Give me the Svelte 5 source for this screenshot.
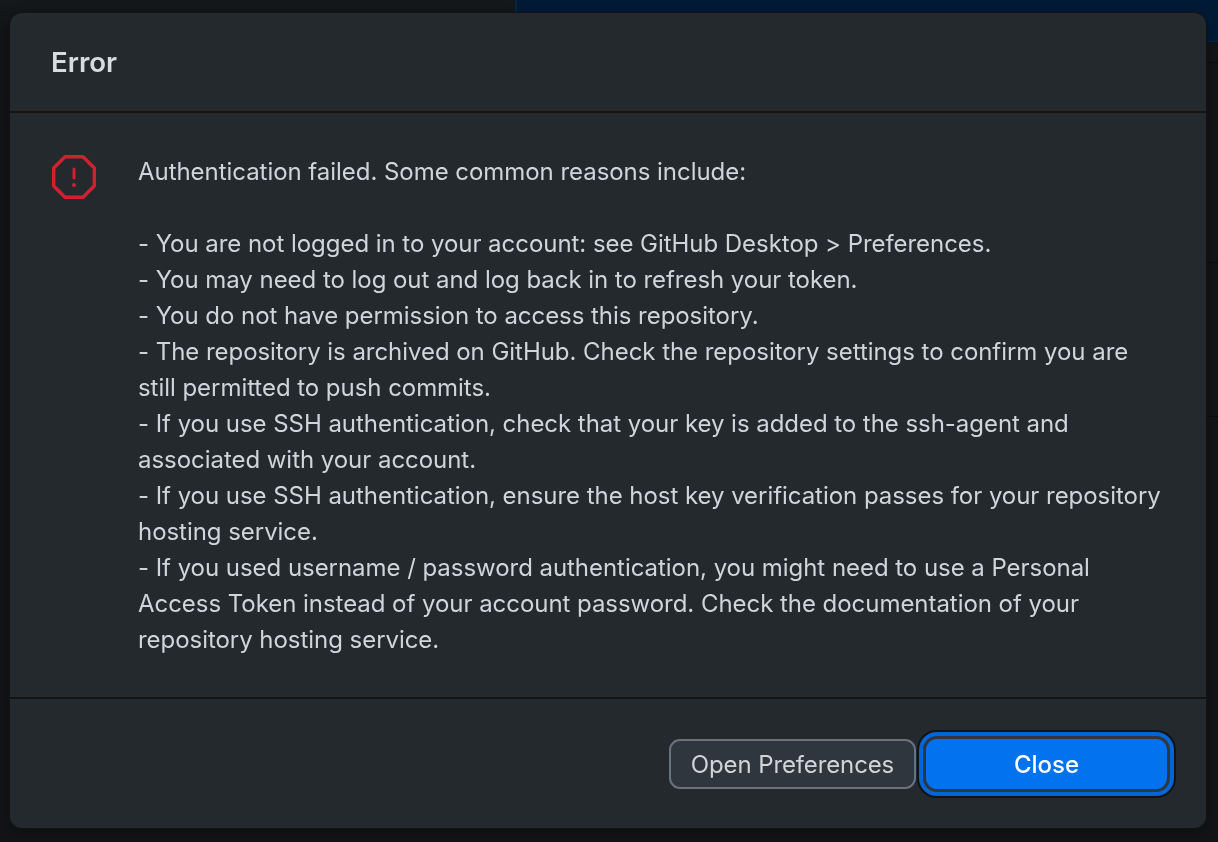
<script>
  const lines = [
    'Authentication failed. Some common reasons include:',
    '',
    '- You are not logged in to your account: see GitHub Desktop > Preferences.',
    '- You may need to log out and log back in to refresh your token.',
    '- You do not have permission to access this repository.',
    '- The repository is archived on GitHub. Check the repository settings to confirm you are still permitted to push commits.',
    '- If you use SSH authentication, check that your key is added to the ssh-agent and associated with your account.',
    '- If you use SSH authentication, ensure the host key verification passes for your repository hosting service.',
    '- If you used username / password authentication, you might need to use a Personal Access Token instead of your account password. Check the documentation of your repository hosting service.'
  ];
</script>

<div class="backdrop">
  <div class="sidebar"></div>
  <div class="content">
    <div class="banner"></div>
    <div class="row r1"></div>
    <div class="row r2"></div>
    <div class="row r3"></div>
  </div>
</div>

<div class="dialog" role="dialog">
  <header>Error</header>
  <main>
    <svg class="icon" viewBox="0 0 44 44" aria-hidden="true">
      <polygon class="oct" points="13,1.7 31,1.7 42.3,13 42.3,31 31,42.3 13,42.3 1.7,31 1.7,13" />
      <line class="bang" x1="22" y1="14" x2="22" y2="23" />
      <circle class="dot" cx="22" cy="30" r="2" />
    </svg>
    <div class="message">
      {#each lines as line}
        <p>{line || '\u00a0'}</p>
      {/each}
    </div>
  </main>
  <footer>
    <button class="secondary">Open Preferences</button>
    <button class="primary">Close</button>
  </footer>
</div>

<style>
  :global(body) {
    margin: 0;
    background: #121417;
    overflow: hidden;
  }
  .backdrop {
    height: 842px;
    display: flex;
    background: #121417;
  }
  .sidebar {
    width: 515px;
    background: linear-gradient(#16191b 0, #121417 30px);
  }
  .content {
    flex: 1;
    display: flex;
    flex-direction: column;
  }
  .banner {
    height: 41px;
    background: #001a36;
    border-left: 2px solid #02264f;
    border-bottom: 1px solid #02264f;
  }
  .row { border-bottom: 1px solid #0b0c0e; }
  .r1 { height: 20px; }
  .r2 { height: 199px; }
  .r3 { height: 153px; }

  .dialog {
    position: fixed;
    left: 10px;
    top: 13px;
    width: 1196px;
    height: 815px;
    display: flex;
    flex-direction: column;
    background: #24292e;
    border-radius: 12px;
    box-shadow: 0 0 0 1px #111316, 0 4px 16px rgba(0, 0, 0, 0.35);
    color: #d1d5da;
    font-family: Inter, "Noto Sans", sans-serif;
  }
  header {
    height: 100px;
    box-sizing: border-box;
    padding: 31px 41px 0;
    font-size: 27.6px;
    line-height: 36px;
    font-weight: 600;
    color: #d8dce1;
    border-bottom: 2px solid #141414;
  }
  main {
    flex: 1;
    display: flex;
    padding: 41px 40px 0 42px;
    min-height: 0;
  }
  .icon {
    flex: none;
    margin-top: 1px;
    margin-right: 42px;
    width: 44px;
    height: 44px;
  }
  .oct {
    fill: none;
    stroke: #cf222e;
    stroke-width: 3.4;
    stroke-linejoin: round;
  }
  .bang {
    stroke: #cf222e;
    stroke-width: 3;
    stroke-linecap: round;
  }
  .dot { fill: #cf222e; }
  .message {
    flex: 1;
    font-size: 24px;
    line-height: 36px;
    letter-spacing: -0.045px;
  }
  p { margin: 0; }
  footer {
    height: 131px;
    box-sizing: border-box;
    border-top: 2px solid #141414;
    display: flex;
    justify-content: flex-end;
    align-items: flex-start;
    gap: 10px;
    padding: 40px 39px 0 0;
  }
  button {
    font-family: inherit;
    font-size: 24px;
    height: 50px;
    border-radius: 11px;
    padding: 0;
    box-sizing: border-box;
  }
  .secondary {
    width: 247px;
    background: #2f363d;
    border: 2px solid #6a737d;
    color: #d1d5da;
    letter-spacing: -0.12px;
  }
  .primary {
    width: 241px;
    background: #0372ef;
    border: none;
    color: #fff;
    font-weight: 450;
    box-shadow: 0 0 0 3px #2f363d, 0 0 0 7px #0366d6, 0 0 0 9px #111316;
  }
</style>
